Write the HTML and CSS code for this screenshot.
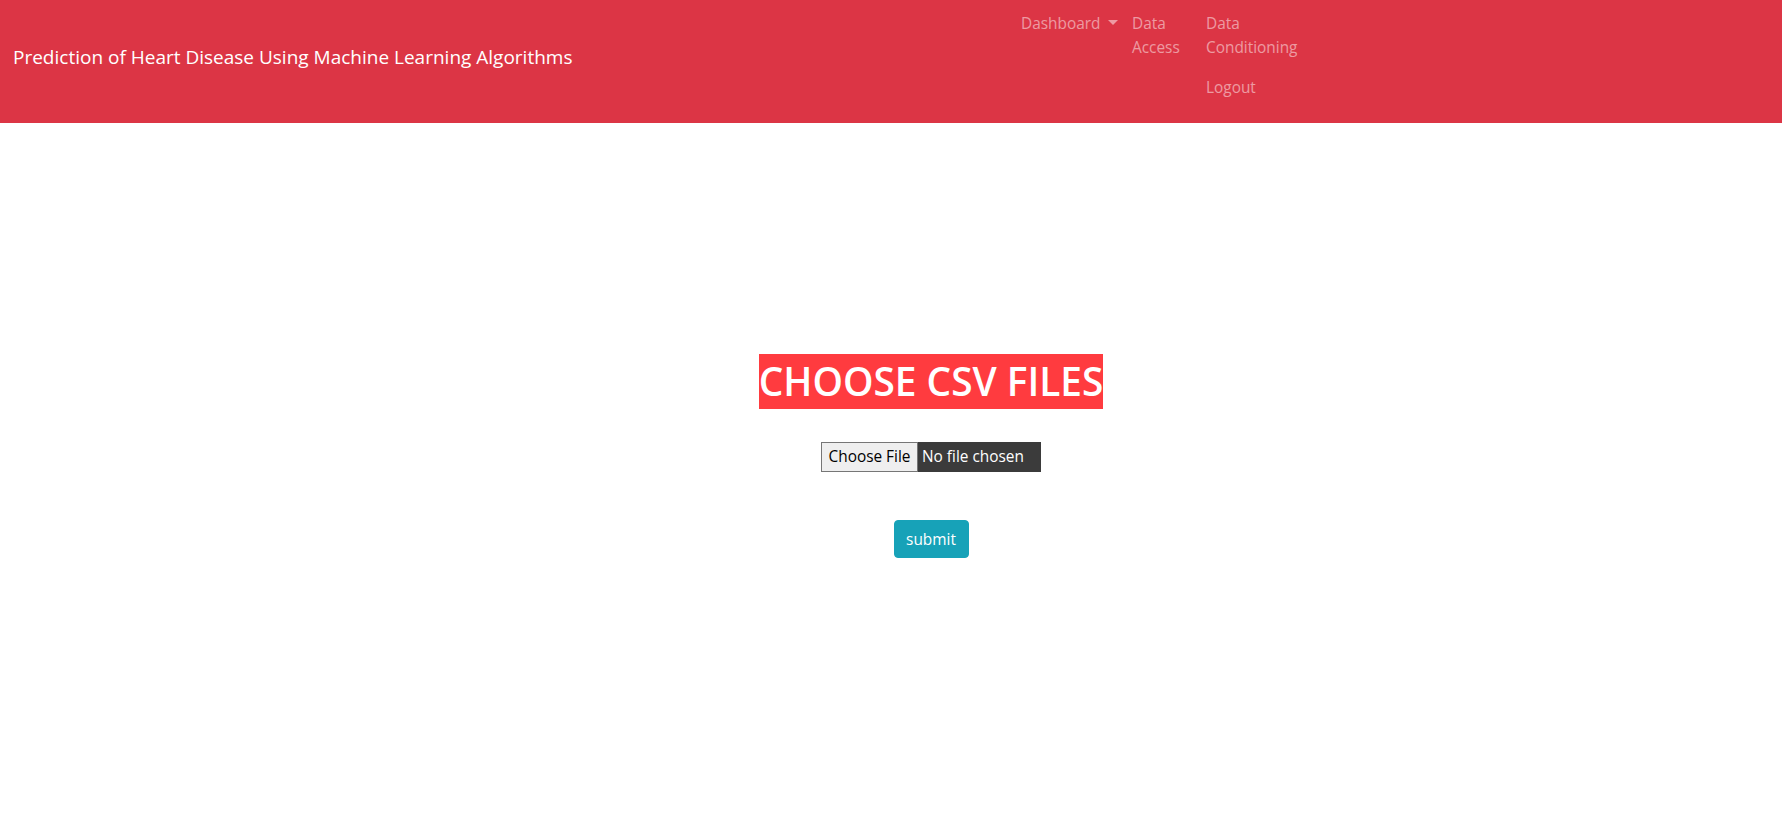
FILE: index.html
```html
<!DOCTYPE html>
<html lang="en">
<head>
<meta charset="utf-8">
<title>Prediction of Heart Disease</title>
<link rel="stylesheet" href="styles.css">
</head>
<body>
<header class="navbar">
  <a class="brand" href="#">Prediction of Heart Disease Using Machine Learning Algorithms</a>
  <ul class="nav">
    <li class="nav-item"><a class="nav-link dropdown" href="#">Dashboard<span class="caret"></span></a></li>
    <li class="nav-item narrow"><a class="nav-link" href="#">Data Access</a></li>
    <li class="nav-item stack">
      <a class="nav-link" href="#">Data Conditioning</a>
      <a class="nav-link" href="#">Logout</a>
    </li>
  </ul>
</header>
<main class="content">
  <h1 class="title">CHOOSE CSV FILES</h1>
  <form class="upload">
    <label class="file">
      <input type="file" class="file-input" accept=".csv">
      <span class="file-btn">Choose File</span><span class="file-name">No file chosen</span>
    </label>
    <button type="submit" class="submit">submit</button>
  </form>
</main>
</body>
</html>
```
FILE: styles.css
```css
* { box-sizing: border-box; }
html, body { margin: 0; padding: 0; }
body {
  font-family: "Open Sans", "Noto Sans", sans-serif;
  font-size: 15.4px;
  line-height: 1.5;
  color: #212529;
  background: #fff;
}
.navbar {
  display: flex;
  align-items: center;
  height: 123px;
  padding: 4px 0 14px 13px;
  background: #dc3545;
}
.brand {
  flex: 0 0 1000px;
  color: #fff;
  text-decoration: none;
  font-size: 19px;
  line-height: 30px;
  white-space: nowrap;
}
.nav {
  display: flex;
  align-items: flex-start;
  align-self: flex-start;
  list-style: none;
  margin: 0;
  padding: 0;
}
.nav-item { display: flex; flex-direction: column; }
.nav-link {
  display: block;
  padding: 8px;
  color: rgba(255, 255, 255, 0.5);
  text-decoration: none;
  line-height: 24px;
}
.dropdown { width: 111px; white-space: nowrap; }
.caret {
  display: inline-block;
  margin-left: 8px;
  vertical-align: 4px;
  border-top: 5px solid;
  border-left: 5px solid transparent;
  border-right: 5px solid transparent;
}
.narrow .nav-link { width: 74px; }
.stack .nav-link { width: 107px; }
.content {
  display: flex;
  flex-direction: column;
  align-items: center;
  padding: 231px 0 0 80px;
}
.title {
  margin: 0;
  background: #ff3b3f;
  color: #fff;
  font-size: 38.8px;
  font-weight: 600;
  line-height: 55px;
}
.upload {
  display: flex;
  flex-direction: column;
  align-items: center;
  margin-top: 33px;
}
.file { display: flex; height: 30px; cursor: pointer; }
.file-input { display: none; }
.file-btn {
  display: flex;
  align-items: center;
  width: 97px;
  justify-content: center;
  background: #efefef;
  border: 1px solid #767676;
  color: #000;
}
.file-name {
  display: flex;
  align-items: center;
  width: 123px;
  padding-left: 4px;
  background: #3b3b3b;
  color: #fff;
}
.submit {
  margin-top: 48px;
  height: 38px;
  width: 75px;
  padding: 0;
  border: 1px solid #17a2b8;
  border-radius: 4px;
  background: #17a2b8;
  color: #fff;
  font-family: inherit;
  font-size: 15.4px;
}
```
